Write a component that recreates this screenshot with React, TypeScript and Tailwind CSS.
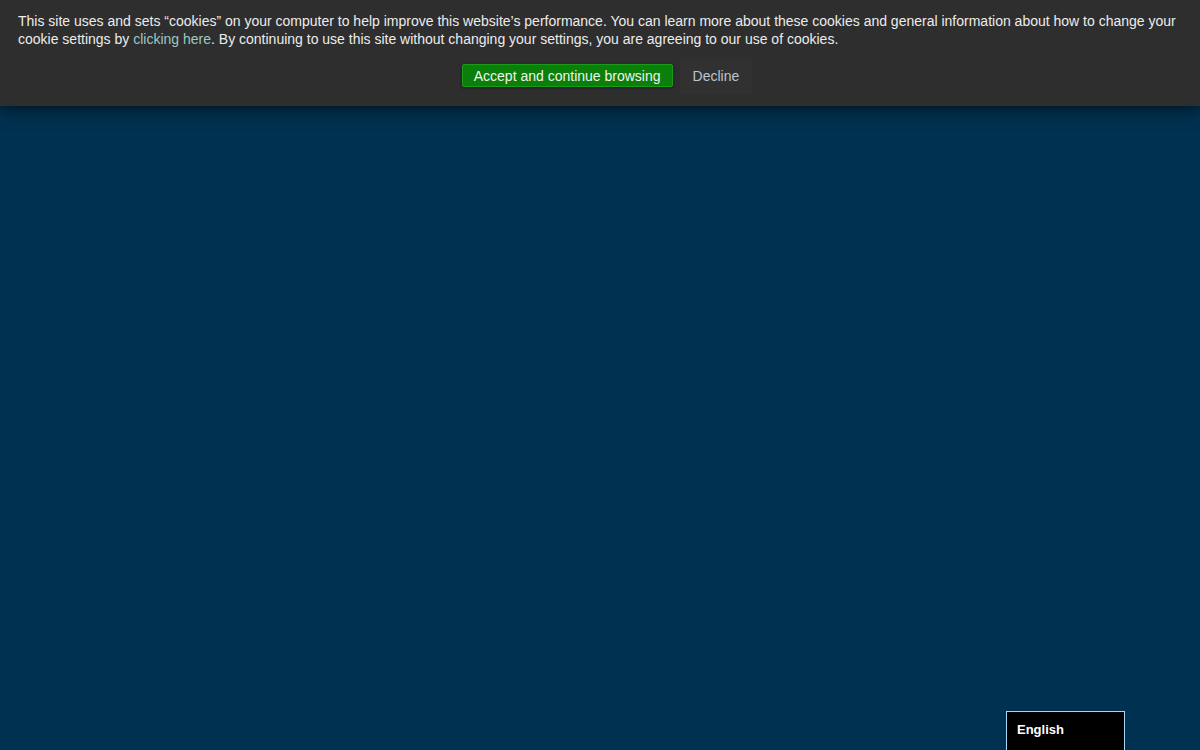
export default function App() {
  return (
    <div
      className="relative w-[1200px] h-[750px] overflow-hidden bg-[#003150]"
      style={{ fontFamily: '"Liberation Sans", Arial, sans-serif' }}
    >
      {/* cookie notice bar */}
      <div className="relative z-10 h-[106px] bg-[#2e2e2e] shadow-[0_4px_14px_rgba(0,0,0,0.55)] pl-[18px] pr-[14px] pt-[12px]">
        <p className="text-[14px] leading-[18px] text-[#ececec]">
          This site uses and sets “cookies” on your computer to help improve this website’s performance. You can learn more about these cookies and general information about how to change your cookie settings by{" "}
          <a className="text-[#9fc7c4]">clicking here</a>. By continuing to use this site without changing your settings, you are agreeing to our use of cookies.
        </p>
        <div className="flex justify-center items-center mt-[9px] gap-[7px] pl-[10px]">
          <button className="h-[23px] px-[11px] bg-[#0a7f0a] border border-[#1c9a1c] rounded-[2px] text-[14px] leading-[18px] text-[#f2f2f2] shadow-[0_1px_3px_rgba(0,0,0,0.4)]">
            Accept and continue browsing
          </button>
          <button className="h-[37px] px-[13px] bg-[#313131] text-[14px] leading-[18px] text-[#b9c6d2]">
            Decline
          </button>
        </div>
      </div>

      {/* language selector */}
      <div className="absolute left-[1006px] top-[711px] w-[119px] h-[45px] bg-black border border-[#a9d6f2] pl-[10px] pt-[5px]">
        <span className="text-[13px] leading-[16px] font-bold text-white">English</span>
      </div>
    </div>
  );
}
